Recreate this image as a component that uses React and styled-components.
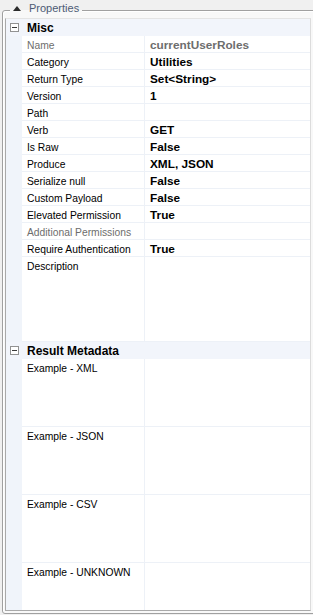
import styled, { createGlobalStyle } from "styled-components";

const GlobalStyle = createGlobalStyle`
  html, body {
    margin: 0;
    padding: 0;
    background: #f0f0f0;
  }
  * {
    box-sizing: border-box;
  }
`;

const Window = styled.div`
  width: 313px;
  height: 615px;
  overflow: hidden;
  background: #f0f0f0;
  padding: 10px 0 0 2px;
  font-family: "Liberation Sans", Arial, sans-serif;
  font-size: 10.3px;
  color: #000;
`;

const GroupBox = styled.div`
  height: 604px;
  margin-right: -6px;
  border: 1px solid #a0a0a0;
  border-top-left-radius: 3px;
  border-bottom-left-radius: 3px;
  box-shadow: inset 1px 1px 0 #ffffff;
  background: #f8f8f8;
  padding: 0 0 0 2px;
`;

const Legend = styled.div`
  display: flex;
  align-items: center;
  gap: 8px;
  width: fit-content;
  height: 14px;
  margin: -10px 0 0 5px;
  padding: 0 3px;
  background: linear-gradient(#f0f0f0 0 9px, #f8f8f8 9px);
`;

const Arrow = styled.span`
  width: 0;
  height: 0;
  border-left: 4.5px solid transparent;
  border-right: 4.5px solid transparent;
  border-bottom: 5px solid #2b2b2b;
`;

const LegendText = styled.span`
  color: #4d5b74;
  font-size: 11px;
  line-height: 14px;
`;

const Grid = styled.div`
  width: 306px;
  height: 593px;
  margin-top: 3px;
  overflow: hidden;
  background: #f0f4fa;
  border: 1px solid #a9a9a9;
  border-top-color: #e4e4e4;
  border-right-color: #dcdcdc;
`;

const CategoryRow = styled.div`
  display: grid;
  grid-template-columns: 16px 1fr;
  align-items: center;
  height: 17px;
  background: #f2f5fb;
`;

const Toggle = styled.span`
  justify-self: center;
  width: 9px;
  height: 9px;
  border: 1px solid #929292;
  background: #fff;
  display: flex;
  align-items: center;
  justify-content: center;

  &::after {
    content: "";
    width: 5px;
    height: 1px;
    background: #3a3a3a;
  }
`;

const CategoryName = styled.span`
  padding: 1px 0 0 5px;
  font-weight: 700;
  font-size: 12px;
  line-height: 16px;
`;

const Row = styled.div`
  display: grid;
  grid-template-columns: 16px 123px 1fr;
  height: ${(p) => p.$height || 17}px;
`;

const Gutter = styled.div`
  background: #f0f4fa;
`;

const NameCell = styled.div`
  background: #fff;
  border-right: 1px solid #edf1f7;
  border-bottom: 1px solid #edf1f7;
  padding: 2px 0 0 5px;
  line-height: 15px;
  white-space: nowrap;
  overflow: hidden;
  color: ${(p) => (p.$disabled ? "#6d6d6d" : "#000")};
`;

const ValueCell = styled.div`
  background: #fff;
  border-bottom: 1px solid #edf1f7;
  padding: 2px 0 0 5px;
  line-height: 15px;
  white-space: nowrap;
  overflow: hidden;
  font-weight: 700;
  font-size: 11.8px;
  color: ${(p) => (p.$disabled ? "#6d6d6d" : "#000")};
`;

const misc = [
  { name: "Name", value: "currentUserRoles", disabled: true },
  { name: "Category", value: "Utilities" },
  { name: "Return Type", value: "Set<String>" },
  { name: "Version", value: "1" },
  { name: "Path", value: "" },
  { name: "Verb", value: "GET" },
  { name: "Is Raw", value: "False" },
  { name: "Produce", value: "XML, JSON" },
  { name: "Serialize null", value: "False" },
  { name: "Custom Payload", value: "False" },
  { name: "Elevated Permission", value: "True" },
  { name: "Additional Permissions", value: "", disabled: true },
  { name: "Require Authentication", value: "True" },
  { name: "Description", value: "", height: 85 },
];

const metadata = [
  { name: "Example - XML", value: "", height: 68 },
  { name: "Example - JSON", value: "", height: 68 },
  { name: "Example - CSV", value: "", height: 68 },
  { name: "Example - UNKNOWN", value: "", height: 68 },
];

const Category = ({ title, rows }) => (
  <>
    <CategoryRow>
      <Toggle />
      <CategoryName>{title}</CategoryName>
    </CategoryRow>
    {rows.map((r) => (
      <Row key={r.name} $height={r.height}>
        <Gutter />
        <NameCell $disabled={r.disabled}>{r.name}</NameCell>
        <ValueCell $disabled={r.disabled}>{r.value}</ValueCell>
      </Row>
    ))}
  </>
);

const App = () => {
  return (
    <Window>
      <GlobalStyle />
      <GroupBox>
        <Legend>
          <Arrow />
          <LegendText>Properties</LegendText>
        </Legend>
        <Grid>
          <Category title="Misc" rows={misc} />
          <Category title="Result Metadata" rows={metadata} />
        </Grid>
      </GroupBox>
    </Window>
  );
};

export default App;
